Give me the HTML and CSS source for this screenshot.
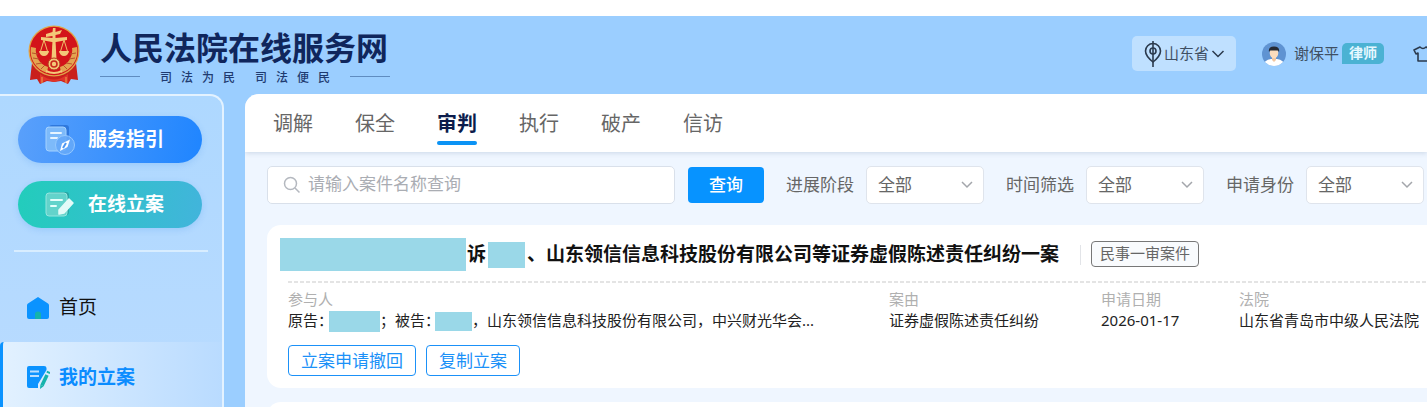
FILE: index.html
```
<!DOCTYPE html>
<html lang="zh-CN">
<head>
    <meta charset="UTF-8">
    <meta name="viewport" content="width=device-width, initial-scale=1.0">
    <title>人民法院在线服务网</title>
    <link rel="stylesheet" href="styles.css">
</head>
<body>
    <div class="app">
        <header class="header">
            <svg class="emblem" viewBox="0 0 52 60">
                <path d="M4 38 L2 55 L9 54 L12 59 L19 56 L26 57 L33 56 L40 59 L43 54 L50 55 L48 38 Z" fill="#c9201c"/>
                <path d="M12 49 Q26 60 40 49 L40 58 L33 55 L26 57 L19 55 L12 58 Z" fill="#e0352a"/>
                <path d="M14 52 V58 M38 52 V58" stroke="#e9a84a" stroke-width="1"/>
                <circle cx="26" cy="26" r="25.5" fill="#e0a548"/>
                <circle cx="26" cy="26" r="24.200" fill="#d3141a"/>
                <path d="M3 22 A23 23 0 0 0 19 48 L20 42 A17 17 0 0 1 8 23 Z M49 22 A23 23 0 0 1 33 48 L32 42 A17 17 0 0 0 44 23 Z" fill="#e3a550"/>
                <path d="M4 28 L10 29 M5 33 L11 34 M8 39 L14 38 M13 44 L17 40 M48 28 L42 29 M47 33 L41 34 M44 39 L38 38 M39 44 L35 40" stroke="#b8542a" stroke-width="1"/>
                <path d="M24.500 15 H27.500 L28.500 35 H23.500 Z" fill="#f3c878"/>
                <path d="M25 3 L27.500 3 L27.500 7 L34 5 L32 9 L27.500 10 V13 L39 12 V15 L28 17 H24 L13 15 V12 L24.500 13 V11 L18 12 L18 9 L24.500 7 Z" fill="#f3c878"/>
                <path d="M16 15 L12 28 M16 15 L20 28 M36 15 L32 28 M36 15 L40 28" stroke="#f0bd68" stroke-width="1"/>
                <path d="M11 26 H21 Q20 31 16 31 Q12 31 11 26 Z M31 26 H41 Q40 31 36 31 Q32 31 31 26 Z" fill="#f3c878"/>
                <circle cx="26" cy="39" r="6" fill="#f3c878" stroke="#b8371d" stroke-width="1"/>
                <circle cx="26" cy="39" r="3.800" fill="#c9281c"/>
                <circle cx="26" cy="39" r="2.200" fill="#f3c878"/>
                <path d="M18 46 Q26 50 34 46" stroke="#f3c878" stroke-width="2" fill="none"/>
            </svg>
            <div class="brand">
                <h1>人民法院在线服务网</h1>
                <div class="slogan">
                    <i></i>
                    <p><span>司</span><span>法</span><span>为</span><span>民</span></p>
                    <p><span>司</span><span>法</span><span>便</span><span>民</span></p>
                    <i></i>
                </div>
            </div>
            <div class="header-right">
                <button class="area" type="button">
                    <svg width="18" height="28" viewBox="0 0 18 28" fill="none" stroke="#2b3a4d" stroke-width="1.6">
                        <path d="M9 1 V27"/>
                        <path d="M9 22 C4 18 1.500 15 1.500 11 A7.500 7.500 0 0 1 16.500 11 C16.500 15 14 18 9 22 Z"/>
                        <circle cx="9" cy="11" r="3"/>
                    </svg>
                    <span>山东省</span>
                    <svg width="14" height="10" viewBox="0 0 14 10" fill="none" stroke="#2b3a4d" stroke-width="1.5"><path d="M1.500 2 L7 7.500 L12.500 2"/></svg>
                </button>
                <a class="user" href="#">
                    <svg width="24" height="24" viewBox="0 0 24 24">
                        <defs><clipPath id="face"><circle cx="12" cy="12" r="12"/></clipPath></defs>
                        <g clip-path="url(#face)">
                            <rect width="24" height="24" fill="#5f93d2"/>
                            <path d="M1 24 Q2 18 9 17 H15 Q22 18 23 24 Z" fill="#fff"/>
                            <path d="M10 14 H14 V18 L12 20 L10 18 Z" fill="#f2c6a0"/>
                            <ellipse cx="12" cy="11" rx="4.300" ry="5.300" fill="#fbdcbd"/>
                            <path d="M7 10 Q6 4.500 12 4.500 Q18 4.500 17 10 L16 8.500 H8 Z" fill="#262a33"/>
                        </g>
                    </svg>
                    <span class="name">谢保平</span>
                    <span class="role">律师</span>
                </a>
                <a class="skin" href="#" aria-label="换肤">
                    <svg width="20" height="18" viewBox="0 0 20 18" fill="none" stroke="#2b3a4d" stroke-width="1.6" stroke-linejoin="round"><path d="M7 2 L1 5 L3 9 L5 8 V16 H15 V8 L17 9 L19 5 L13 2 Q10 5 7 2 Z"/></svg>
                </a>
            </div>
        </header>
        <div class="body">
            <aside class="sidebar">
                <button class="pill blue" type="button">
                    <svg width="32" height="32" viewBox="0 0 32 32">
                        <rect x="5" y="1" width="20" height="24" rx="3" fill="#2f78dc"/>
                        <rect x="2" y="3" width="20" height="24" rx="3" fill="#7dbafa" stroke="#a5d2ff"/>
                        <path d="M7 9 H17 M7 14 H13" stroke="#e8f5ff" stroke-width="2" stroke-linecap="round"/>
                        <circle cx="21" cy="21" r="9.500" fill="#65a9f8" fill-opacity=".9" stroke="#94c8ff"/>
                        <path d="M26 15.500 L23.500 23 L16 27 L18 19.500 Z" fill="#fff"/>
                        <path d="M22 19 L19 24" stroke="#4b96f4" stroke-width="2"/>
                    </svg>
                    <span>服务指引</span>
                </button>
                <button class="pill green" type="button">
                    <svg width="32" height="32" viewBox="0 0 32 32">
                        <rect x="5" y="3" width="20" height="23" rx="3" fill="#28a6a4"/>
                        <rect x="2" y="4" width="21" height="23" rx="3" fill="#63d3cb" stroke="#95e6df"/>
                        <path d="M7 11 H18 M7 17 H12" stroke="#e6fffc" stroke-width="2" stroke-linecap="round"/>
                        <path d="M25 10 L29 14 L20 24 L15 25 L15 21 Z" fill="#e3fbf8" stroke="#e3fbf8" stroke-width="1.500" stroke-linejoin="round"/>
                    </svg>
                    <span>在线立案</span>
                </button>
                <nav class="menu">
                    <a href="#">
                        <svg width="24" height="24" viewBox="0 0 24 24"><path d="M12 1 L22 7.500 Q23 8 23 9.500 V21 Q23 23 21 23 H3 Q1 23 1 21 V9.500 Q1 8 2 7.500 Z" fill="#0b93ff"/><path d="M9 23 V18 Q9 15.500 12 15.500 Q15 15.500 15 18 V23 Z" fill="#15b3ac"/></svg>
                        <span>首页</span>
                    </a>
                    <a class="current" href="#">
                        <svg width="24" height="24" viewBox="0 0 24 24"><path d="M3 1 H18 Q20.500 1 20.500 3 V5 L12 19 V23 H3 Q1 23 1 21 V3 Q1 1 3 1 Z" fill="#0b93ff"/><path d="M4 6.500 H13 M4 11 H13" stroke="#b9dfff" stroke-width="2"/><path d="M21 10 L16 20.500" stroke="#15b3ac" stroke-width="3.600"/><path d="M22.800 6.500 L22 8.200" stroke="#15b3ac" stroke-width="3.600"/><path d="M14.400 19.700 L17.600 21.200 L14 24 Z" fill="#15b3ac"/></svg>
                        <span>我的立案</span>
                    </a>
                </nav>
            </aside>
            <main class="main">
                <nav class="tabs">
                    <a href="#">调解</a>
                    <a href="#">保全</a>
                    <a class="current" href="#">审判</a>
                    <a href="#">执行</a>
                    <a href="#">破产</a>
                    <a href="#">信访</a>
                </nav>
                <form class="filter">
                    <label class="search">
                        <svg width="18" height="18" viewBox="0 0 18 18" fill="none" stroke="#b4b8bf" stroke-width="1.500"><circle cx="7.500" cy="7.500" r="6"/><path d="M12 12 L16.500 16.500"/></svg>
                        <input type="text" placeholder="请输入案件名称查询" aria-label="案件名称">
                    </label>
                    <button class="query" type="button">查询</button>
                    <div class="field">
                        <label for="stage">进展阶段</label>
                        <div class="select">
                            <select id="stage"><option>全部</option></select>
                            <svg width="12" height="8" viewBox="0 0 12 8"><path d="M1 1 L6 6 L11 1"/></svg>
                        </div>
                    </div>
                    <div class="field">
                        <label for="time">时间筛选</label>
                        <div class="select">
                            <select id="time"><option>全部</option></select>
                            <svg width="12" height="8" viewBox="0 0 12 8"><path d="M1 1 L6 6 L11 1"/></svg>
                        </div>
                    </div>
                    <div class="field">
                        <label for="identity">申请身份</label>
                        <div class="select">
                            <select id="identity"><option>全部</option></select>
                            <svg width="12" height="8" viewBox="0 0 12 8"><path d="M1 1 L6 6 L11 1"/></svg>
                        </div>
                    </div>
                </form>
                <section class="card">
                    <div class="card-title">
                        <span class="mask mask-lg"></span>
                        <h2>诉<span class="mask mask-md"></span>、山东领信信息科技股份有限公司等证券虚假陈述责任纠纷一案</h2>
                        <span class="type">民事一审案件</span>
                    </div>
                    <dl class="info">
                        <div>
                            <dt>参与人</dt>
                            <dd>原告：<span class="mask mask-a"></span>；被告：<span class="mask mask-b"></span>，山东领信信息科技股份有限公司，中兴财光华会...</dd>
                        </div>
                        <div>
                            <dt>案由</dt>
                            <dd>证券虚假陈述责任纠纷</dd>
                        </div>
                        <div>
                            <dt>申请日期</dt>
                            <dd>2026-01-17</dd>
                        </div>
                        <div>
                            <dt>法院</dt>
                            <dd>山东省青岛市中级人民法院</dd>
                        </div>
                    </dl>
                    <div class="actions">
                        <button type="button">立案申请撤回</button>
                        <button type="button">复制立案</button>
                    </div>
                </section>
                <section class="card next"></section>
            </main>
        </div>
    </div>
</body>
</html>
```
FILE: styles.css
```
*{
    padding: 0;
    margin: 0;
    box-sizing: border-box;
}
html,body{
    height: 100%;
}
body{
    padding-top: 16px;
    font-family: "Noto Sans", "Noto Sans CJK SC", sans-serif;
    font-size: 15px;
    color: #222;
    background: #fff;
    overflow: hidden;
}
a{
    color: inherit;
    text-decoration: none;
}
button,input,select{
    font-family: inherit;
}
button{
    border: 0;
    cursor: pointer;
}
svg{
    flex: none;
}
.app{
    height: 100%;
    display: flex;
    flex-direction: column;
    background: #9bceff;
    overflow: hidden;
}
/* 顶部 */
.header{
    flex: none;
    height: 78px;
    display: flex;
    align-items: center;
    padding-left: 28px;
    white-space: nowrap;
}
.emblem{
    width: 52px;
    height: 60px;
}
.brand{
    margin-left: 20px;
    padding-top: 3px;
}
.brand h1{
    font-size: 32px;
    line-height: 36px;
    color: #10265c;
}
.slogan{
    display: flex;
    justify-content: space-between;
    align-items: center;
    margin-top: 4px;
    width: 290px;
    font-family: "Noto Sans CJK SC", serif;
    font-size: 12px;
    line-height: 14px;
    font-weight: 500;
    color: #1f3b70;
}
.slogan i{
    width: 40px;
    height: 1px;
    background: #5f8cc0;
}
.slogan p{
    display: flex;
    gap: 9px;
}
.header-right{
    display: flex;
    align-items: center;
    margin-left: auto;
    padding-bottom: 3px;
}
.area{
    display: flex;
    align-items: center;
    gap: 2px;
    height: 35px;
    padding: 0 11px 0 12px;
    border-radius: 5px;
    background: #bfe0ff;
    font-size: 15px;
    line-height: 20px;
    color: #3f4f63;
}
.area span,.name{
    padding-bottom: 2px;
}
.user{
    display: flex;
    align-items: center;
    margin-left: 26px;
    color: #3f4f63;
}
.name{
    margin: 0 3px 0 8px;
}
.role{
    height: 21px;
    padding: 0 7px;
    border-radius: 5px 5px 5px 0;
    background: #4bb2d3;
    font-size: 14px;
    line-height: 20px;
    font-weight: bold;
    color: #e6f8ff;
}
.skin{
    display: flex;
    width: 14px;
    margin-left: 29px;
    overflow: hidden;
}
.body{
    flex: 1;
    display: flex;
    gap: 21px;
    min-height: 0;
}
/* 左侧菜单 */
.sidebar{
    flex: none;
    width: 224px;
    padding-top: 20px;
    border: solid #e3f2ff;
    border-width: 2px 2px 0 0;
    border-radius: 0 14px 0 0;
    background: linear-gradient(180deg, #aed8ff, #b9dbff);
}
.pill{
    display: flex;
    align-items: center;
    gap: 12px;
    width: 184px;
    height: 47px;
    margin: 0 0 18px 18px;
    padding-left: 26px;
    border-radius: 24px;
    font-size: 19px;
    line-height: 24px;
    font-weight: bold;
    color: #fff;
    box-shadow: 0 2px 6px rgba(60, 140, 230, .2);
}
.pill span,.menu span{
    padding-bottom: 1px;
}
.blue{
    background: linear-gradient(100deg, #5aa0fb, #1f85ff);
}
.green{
    background: linear-gradient(100deg, #22cdbb, #42b4dc);
}
.menu{
    margin-top: 22px;
    font-size: 19px;
    line-height: 26px;
    color: #111;
}
.menu::before{
    content: "";
    display: block;
    height: 2px;
    margin: 0 14px 23px;
    background: #d8edff;
}
.menu a{
    display: flex;
    align-items: center;
    gap: 9px;
    height: 65px;
    margin-bottom: 2px;
    padding-left: 26px;
}
.menu .current{
    padding-left: 23px;
    border-left: 3px solid #0b93ff;
    border-radius: 4px 0 0 4px;
    background: linear-gradient(90deg, #e2f1ff, #b9dbff);
    height: 70px;
    font-weight: bold;
    color: #0b8cff;
}
/* 右侧内容 */
.main{
    flex: 1;
    min-width: 0;
    border-radius: 14px 0 0 0;
    background: #eff6ff;
    overflow: hidden;
}
.tabs{
    display: flex;
    gap: 42px;
    height: 58px;
    padding-left: 28px;
    background: #fff;
    box-shadow: 0 1px 5px rgba(60, 90, 130, .2);
    font-size: 20px;
    line-height: 60px;
    color: #666;
}
.tabs .current{
    position: relative;
    font-weight: bold;
    color: #0c1c4c;
}
.tabs .current::after{
    content: "";
    position: absolute;
    left: 0;
    right: 0;
    bottom: 7px;
    height: 4px;
    border-radius: 2px;
    background: #0b93f5;
}
.filter{
    display: flex;
    align-items: center;
    height: 38px;
    margin: 14px 3px 21px 22px;
    font-size: 17px;
    color: #666;
    white-space: nowrap;
}
.search{
    flex: 1;
    display: flex;
    align-items: center;
    gap: 7px;
    height: 38px;
    padding: 0 15px;
    border: 1px solid #d9e0ea;
    border-radius: 5px;
    background: #fff;
}
.search input{
    flex: 1;
    min-width: 0;
    padding-bottom: 3px;
    border: 0;
    outline: 0;
    font-size: 17px;
}
.search input::placeholder{
    color: #aaadb3;
}
.query{
    width: 76px;
    height: 36px;
    margin-left: 13px;
    padding-bottom: 3px;
    border-radius: 4px;
    background: #0793ff;
    font-size: 17px;
    font-weight: 500;
    color: #fff;
}
.field{
    display: flex;
    align-items: center;
    gap: 12px;
    margin-left: 22px;
}
.field label{
    padding-bottom: 4px;
}
.select{
    position: relative;
}
.select select{
    display: block;
    width: 118px;
    height: 38px;
    padding: 0 0 2px 11px;
    border: 1px solid #dfe4ec;
    border-radius: 5px;
    background: #fff;
    appearance: none;
    font-size: 17px;
    color: #666;
}
.select svg{
    position: absolute;
    right: 11px;
    top: 15px;
    fill: none;
    stroke: #a3a6ab;
    stroke-width: 1.5;
    pointer-events: none;
}
.card{
    height: 163px;
    margin-left: 22px;
    padding: 13px 0 0 21px;
    border-radius: 14px 0 0 14px;
    background: #fff;
    white-space: nowrap;
}
.next{
    margin-top: 14px;
}
.mask{
    display: inline-block;
    background: #9ad8e8;
    vertical-align: middle;
}
.card-title{
    display: flex;
    align-items: center;
    height: 43px;
    margin-left: -8px;
    padding-bottom: 10px;
}
.card-title h2{
    padding-bottom: 2px;
    font-size: 19px;
    line-height: 30px;
    color: #111;
}
.mask-lg{
    width: 186px;
    height: 33px;
    margin-right: 1px;
}
.mask-md{
    width: 37px;
    height: 26px;
    margin: 0 2px;
}
.mask-a{
    width: 51px;
    height: 21px;
    margin-left: -4px;
}
.mask-b{
    width: 37px;
    height: 19px;
    margin-left: -5px;
}
.type{
    position: relative;
    height: 26px;
    margin: 0 0 2px 32px;
    padding: 0 8px;
    border: 1px solid #777;
    border-radius: 4px;
    background: #f9fbfd;
    line-height: 22px;
    color: #666;
}
.type::before{
    content: "";
    position: absolute;
    left: -12px;
    top: 3px;
    width: 1px;
    height: 20px;
    background: #e2e4e8;
}
.info{
    display: grid;
    grid-template-columns: 1fr 212px 138px 188px;
    padding-top: 8px;
    line-height: 21px;
    background: repeating-linear-gradient(90deg, #e4e4e4 0 4px, #fff 4px 6px) no-repeat 0 0 / 100% 2px;
}
.info dt{
    color: #b0b0b0;
}
.info dd{
    height: 21px;
}
.actions{
    display: flex;
    gap: 10px;
    margin-top: 14px;
}
.actions button{
    height: 31px;
    padding: 0 12px;
    border: 1px solid #1b91f8;
    border-radius: 4px;
    background: #fff;
    font-size: 17px;
    line-height: 27px;
    color: #1b91f8;
}
```
